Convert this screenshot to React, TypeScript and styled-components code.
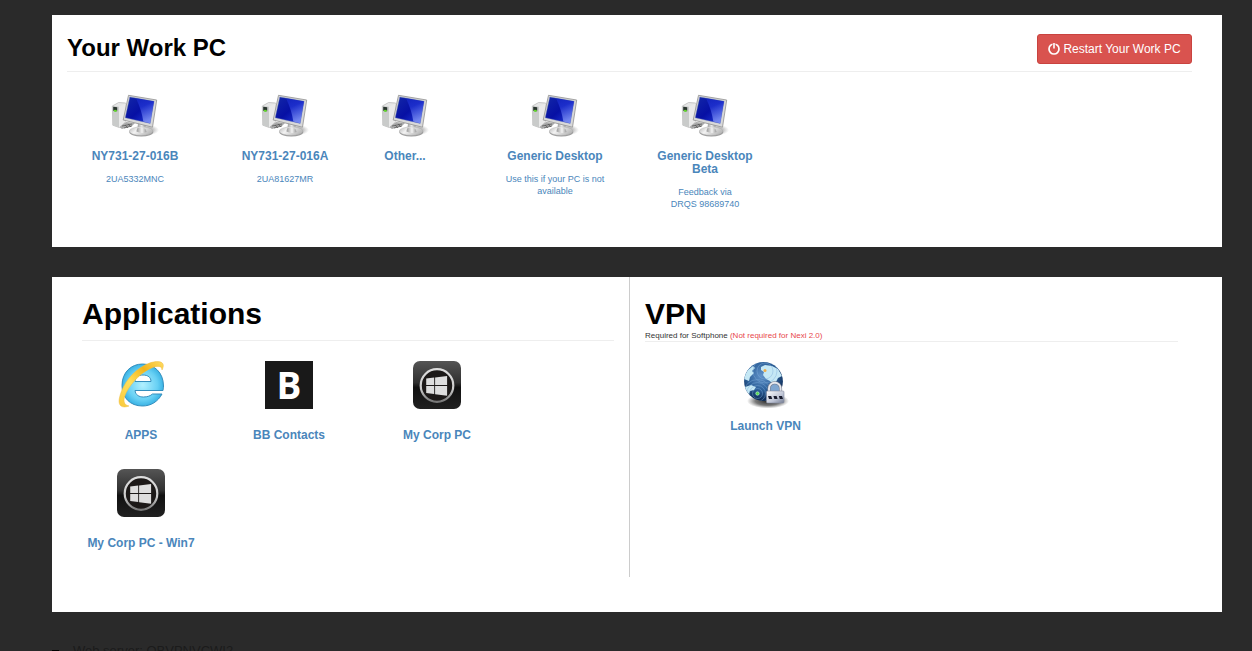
import React, { useId } from "react";
import styled, { createGlobalStyle } from "styled-components";

const GlobalStyle = createGlobalStyle`
  *, *::before, *::after { box-sizing: border-box; }
  html, body { margin: 0; height: 100%; overflow: hidden; }
  body {
    background: #2a2a2a;
    color: #333;
    font-family: "Liberation Sans", Arial, sans-serif;
    font-size: 14px;
  }
`;

const Page = styled.div`
  height: 651px;
  overflow: hidden;
  padding: 15px 30px 0 52px;
`;

const WorkPanel = styled.section`
  height: 232px;
  padding: 0 30px 0 15px;
  background: #fff;
`;

const LowerPanel = styled.section`
  display: flex;
  height: 335px;
  margin-top: 30px;
  padding: 0 15px;
  background: #fff;
`;

const WorkHeader = styled.header`
  display: flex;
  justify-content: space-between;
  align-items: flex-start;
  height: 57px;
  padding-top: 19px;
  border-bottom: 1px solid #eee;
`;

const WorkTitle = styled.h2`
  margin: 0;
  color: #000;
  font-size: 24px;
  line-height: 27px;
`;

const RestartButton = styled.button`
  display: flex;
  align-items: center;
  justify-content: center;
  gap: 3px;
  width: 155px;
  height: 30px;
  padding: 0;
  border: 1px solid #c9433f;
  border-radius: 3px;
  background: #d9534f;
  color: #fff;
  font: 12px "Liberation Sans", Arial, sans-serif;
  white-space: nowrap;
`;

const WorkList = styled.div`
  display: flex;
  padding: 22px 0 0 8px;
`;

const Tile = styled.a<{ $gap?: number }>`
  display: flex;
  flex-direction: column;
  align-items: center;
  width: 120px;
  margin-right: ${(p) => p.$gap ?? 30}px;
  color: #4a86bb;
  text-align: center;
  text-decoration: none;
`;

const TileLabel = styled.strong`
  margin-top: 12px;
  font-size: 12px;
  line-height: 13px;
`;

const TileNote = styled.span`
  margin-top: 10px;
  font-size: 9px;
  line-height: 12px;
  white-space: pre-line;
`;

const AppsColumn = styled.div`
  width: 563px;
  height: 300px;
  padding: 0 15px;
  border-right: 1px solid #ccc;
`;

const VpnColumn = styled.div`
  width: 563px;
  height: 300px;
  padding: 0 15px;
`;

const AppsHeader = styled.header`
  height: 64px;
  padding-top: 19px;
  border-bottom: 1px solid #eee;
`;

const VpnHeader = styled.header`
  height: 65px;
  padding-top: 19px;
  border-bottom: 1px solid #eee;
`;

const SectionTitle = styled.h1`
  margin: 0;
  color: #000;
  font-size: 30px;
  line-height: 35px;
`;

const Requirement = styled.p`
  margin: 0;
  font-size: 8px;
  line-height: 9px;
`;

const Warning = styled.span`
  color: #e8474b;
`;

const AppGrid = styled.div`
  display: grid;
  grid-template-columns: repeat(3, 148px);
  grid-auto-rows: 108px;
  margin-left: -15px;
  padding-top: 20px;
`;

const AppLink = styled.a`
  display: flex;
  flex-direction: column;
  align-items: center;
  color: #4a86bb;
  font-size: 12px;
  font-weight: bold;
  line-height: 14px;
  gap: 19px;
`;

const VpnLink = styled(AppLink)`
  width: 241px;
  padding-top: 18px;
  gap: 9px;
`;

const ContactMark = styled.div`
  width: 48px;
  height: 48px;
  background: #191919;
  color: #fff;
  font: bold 37px/47px "Open Sans", "Noto Sans", sans-serif;
  text-align: center;
`;

const Footer = styled.footer`
  display: flex;
  align-items: flex-start;
  gap: 14px;
  height: 39px;
  padding-top: 30px;
  overflow: hidden;
  color: #1b1b1b;
  font-size: 13px;
  line-height: 17px;
`;

const FooterMark = styled.span`
  width: 7px;
  height: 2px;
  margin-top: 8px;
  background: #000;
`;

const Icon = styled.svg`
  display: block;
  flex: none;
`;

function ComputerIcon() {
  const id = useId();
  const ref = (name: string) => `url(#${id}${name})`;
  return (
    <Icon width="50" height="44" viewBox="0 0 50 44">
      <defs>
        <linearGradient id={id + "screen"} x1="0" y1="0" x2="1" y2="1">
          <stop offset="0" stopColor="#1428a8" />
          <stop offset=".5" stopColor="#0610a4" />
          <stop offset="1" stopColor="#263fe0" />
        </linearGradient>
        <linearGradient id={id + "gloss"} x1="0" y1="0" x2=".3" y2="1">
          <stop offset="0" stopColor="#1526c4" />
          <stop offset=".4" stopColor="#2438d8" />
          <stop offset="1" stopColor="#8ea2fa" />
        </linearGradient>
        <linearGradient id={id + "metal"}>
          <stop offset="0" stopColor="#999" />
          <stop offset=".55" stopColor="#f2f2f2" />
          <stop offset="1" stopColor="#999" />
        </linearGradient>
        <linearGradient id={id + "base"} x2="1" y2=".4">
          <stop offset="0" stopColor="#b5b5b5" />
          <stop offset=".4" stopColor="#f3f3f3" />
          <stop offset="1" stopColor="#bbb" />
        </linearGradient>
        <radialGradient id={id + "shadow"}>
          <stop offset="0" stopColor="#333" stopOpacity=".8" />
          <stop offset="1" stopColor="#777" stopOpacity="0" />
        </radialGradient>
      </defs>
      <ellipse cx="36" cy="36" rx="13" ry="5.5" fill={ref("shadow")} />
      <path d="m9 33 7-5 9 1-3 3-10 3Z" fill="#aaa" />
      <path d="m12 32 10-2M14 34l8-2M15 31l3 3M18 30l3 3" fill="none" stroke="#555" strokeWidth=".7" />
      <path d="m2.3 12 6.3-3.5 7 .5v18.5l-6.5 6-6.3-2.3Z" fill="#e6e6e6" stroke="#aaa" strokeWidth=".6" />
      <path d="m2.5 12 6.5.8v20.4l-6.2-2Z" fill="#c9cbca" />
      <path d="m9 12.8 6.6-3.6v18.3L9 33.2Z" fill="#eaeaea" />
      <path d="m3.2 12.7 4 .5v4.1l-4-.5Z" fill="#29342e" />
      <ellipse cx="5.3" cy="16.8" rx="1.7" ry="1.1" fill="#61d52c" />
      <path d="M28 29h7.5v6h-8Z" fill={ref("metal")} />
      <ellipse cx="31.3" cy="38" rx="12" ry="4.5" fill="#999" />
      <ellipse cx="31" cy="37.1" rx="11.7" ry="4.2" fill={ref("base")} stroke="#bbb" strokeWidth=".5" />
      <path d="M27 34.5q4-2 8.5.5l1 3q-5 2-10-.5Z" fill={ref("metal")} />
      <path d="M18.5 1.3 46.7 6 42.5 33.2 13.2 26Z" fill="#d9d9d9" stroke="#909090" strokeWidth=".8" strokeLinejoin="round" />
      <path d="M19.8 2.9 44.1 7.2 40.2 29.4 15.2 23.7Z" fill={ref("screen")} stroke="#7084b5" strokeWidth=".4" />
      <path d="M26 4.2 43.9 7.4 40.1 29.2 33.3 27.6Q32 17 26 4.2Z" fill={ref("gloss")} opacity=".75" />
    </Icon>
  );
}

function ExplorerIcon() {
  const id = useId();
  return (
    <Icon width="48" height="48" viewBox="0 0 48 48">
      <defs>
        <radialGradient id={id + "blue"} cx=".5" cy=".5" r=".55">
          <stop offset="0" stopColor="#b1f0ff" />
          <stop offset=".65" stopColor="#67d0f4" />
          <stop offset="1" stopColor="#2ba9df" />
        </radialGradient>
        <linearGradient id={id + "gold"} x1="0" y1="1" x2="1" y2="0">
          <stop offset="0" stopColor="#f9ca3d" />
          <stop offset=".4" stopColor="#ffdf59" />
          <stop offset=".7" stopColor="#f2b51a" />
          <stop offset="1" stopColor="#ffdc65" />
        </linearGradient>
      </defs>
      <path
        d="M46 29.5H18C18.5 34 22 36 26.5 36c4 0 7-1.2 9-3H45C41 40.5 34 45 25.5 45 13 45 5 36.5 5 24.5 5 11.5 14 3 25.5 3S46.5 11.5 46.5 25c0 2-.2 3.2-.5 4.5ZM18 20.5h16c0-4-3-6.5-8-6.5s-8 2.5-8 6.5Z"
        fill={`url(#${id}blue)`}
        stroke="#348ebd"
        strokeWidth="1"
        fillRule="evenodd"
      />
      <path
        d="M12 45C5 47.5 1.2 45 2.2 38 4 28 11 15 23 7 33 .2 42-.8 45.3 2c1.5 1.4 1.3 4-.3 7 .1-3.8-3.8-4.5-9.1-2.6C26 10 15 20.5 9.3 31.5 5.8 38.5 6 44 12 45Z"
        fill={`url(#${id}gold)`}
        stroke="#eebc43"
        strokeWidth=".5"
      />
    </Icon>
  );
}

function WindowsIcon() {
  const id = useId();
  return (
    <Icon width="48" height="48" viewBox="0 0 48 48">
      <defs>
        <linearGradient id={id + "case"} x2="0" y2="1">
          <stop offset="0" stopColor="#555" />
          <stop offset=".45" stopColor="#303030" />
          <stop offset=".55" stopColor="#111" />
          <stop offset="1" stopColor="#202020" />
        </linearGradient>
        <linearGradient id={id + "ring"} x2="0" y2="1">
          <stop offset="0" stopColor="#ddd" />
          <stop offset=".6" stopColor="#ccc" />
          <stop offset="1" stopColor="#777" />
        </linearGradient>
      </defs>
      <rect width="48" height="48" rx="7" fill={`url(#${id}case)`} />
      <circle cx="24" cy="24.5" r="16.3" fill="#1c1918" stroke={`url(#${id}ring)`} strokeWidth="2.2" />
      <path
        d="m13.2 17.5 8-.9v7.5h-8Zm8.9-1 12-1.5v9.1h-12Zm-8.9 8.5h8v8l-8-1Zm8.9 0h12v9.7l-12-1.5Z"
        fill="#dedede"
      />
    </Icon>
  );
}

function GlobeLockIcon() {
  const id = useId();
  return (
    <Icon width="50" height="50" viewBox="0 0 50 50">
      <defs>
        <radialGradient id={id + "globe"} cx=".45" cy=".35" r=".62">
          <stop offset="0" stopColor="#6293ca" />
          <stop offset=".6" stopColor="#2d6099" />
          <stop offset="1" stopColor="#102e59" />
        </radialGradient>
        <radialGradient id={id + "shadow"}>
          <stop offset="0" stopColor="#222" />
          <stop offset=".6" stopColor="#333" stopOpacity=".65" />
          <stop offset="1" stopColor="#555" stopOpacity="0" />
        </radialGradient>
        <linearGradient id={id + "lock"} x2="1" y2="1">
          <stop offset="0" stopColor="#fff" />
          <stop offset=".6" stopColor="#bdc3d4" />
          <stop offset="1" stopColor="#737b91" />
        </linearGradient>
        <clipPath id={id + "clip"}>
          <circle cx="22.5" cy="21.5" r="19.3" />
        </clipPath>
      </defs>
      <ellipse cx="27" cy="41" rx="21" ry="7.5" fill={`url(#${id}shadow)`} />
      <circle cx="22.5" cy="21.5" r="19.4" fill={`url(#${id}globe)`} />
      <g clipPath={`url(#${id}clip)`}>
        <path
          d="m3 16 4-6 5-4 2 2-3 3 2 2-4 4-1 4-5-2Zm17-9 4-2 7 1 6 3 4 7-4 2-2 4-4 2-2-3-4-2-3-4 1-3-3-2ZM4 27l6-2 5 2-2 3-4 1-1 3-4-2Z"
          fill="#c5e8f5"
        />
        <g fill="none" stroke="#7faedb" strokeWidth=".6" opacity=".7">
          <circle cx="16.5" cy="33.5" r="5" />
          <circle cx="16.5" cy="33.5" r="8" />
          <circle cx="16.5" cy="33.5" r="11" />
          <circle cx="16.5" cy="33.5" r="14" />
          <circle cx="24" cy="11" r="8" />
          <circle cx="24" cy="11" r="12" />
        </g>
      </g>
      <circle cx="24" cy="10.5" r="1.5" fill="#efad4a" />
      <circle cx="16.5" cy="33.5" r="1.7" fill="#56d64a" stroke="#b6f0d0" strokeWidth=".7" />
      <path d="M28 33v-4.5a5.8 5.8 0 0 1 11.6 0V33" fill="#7fa6d0" stroke="#737a8b" strokeWidth="3" />
      <path d="M28 33v-4.5a5.8 5.8 0 0 1 11.6 0V33" fill="none" stroke="#e6e8ee" strokeWidth="1.9" />
      <rect x="25.5" y="31" width="17.5" height="12" rx="1" fill={`url(#${id}lock)`} stroke="#888da1" strokeWidth=".6" />
      <path d="M27 36h3.2l1 3H28Zm5.4 0h3.2l1 3h-3.2Zm5.4 0H41l1 3h-3.2Z" fill="#191c2d" />
    </Icon>
  );
}

function PowerIcon() {
  return (
    <Icon width="12" height="12" viewBox="0 0 12 12">
      <circle cx="6" cy="6" r="5" fill="none" stroke="#fff" strokeWidth="1.7" />
      <path d="M4.5 0h3v5h-3Z" fill="#d9534f" />
      <path d="M6 0v5.6" stroke="#fff" strokeWidth="1.6" />
    </Icon>
  );
}

const machines: { name: string; note?: string; gap?: number }[] = [
  { name: "NY731-27-016B", note: "2UA5332MNC" },
  { name: "NY731-27-016A", note: "2UA81627MR", gap: 0 },
  { name: "Other..." },
  { name: "Generic Desktop", note: "Use this if your PC is not\navailable" },
  { name: "Generic Desktop Beta", note: "Feedback via\nDRQS 98689740" },
];

export default function App() {
  return (
    <>
      <GlobalStyle />
      <Page>
        <WorkPanel>
          <WorkHeader>
            <WorkTitle>Your Work PC</WorkTitle>
            <RestartButton>
              <PowerIcon />
              Restart Your Work PC
            </RestartButton>
          </WorkHeader>
          <WorkList>
            {machines.map((machine) => (
              <Tile key={machine.name} $gap={machine.gap}>
                <ComputerIcon />
                <TileLabel>{machine.name}</TileLabel>
                {machine.note && <TileNote>{machine.note}</TileNote>}
              </Tile>
            ))}
          </WorkList>
        </WorkPanel>
        <LowerPanel>
          <AppsColumn>
            <AppsHeader>
              <SectionTitle>Applications</SectionTitle>
            </AppsHeader>
            <AppGrid>
              <AppLink>
                <ExplorerIcon />
                APPS
              </AppLink>
              <AppLink>
                <ContactMark>B</ContactMark>
                BB Contacts
              </AppLink>
              <AppLink>
                <WindowsIcon />
                My Corp PC
              </AppLink>
              <AppLink>
                <WindowsIcon />
                My Corp PC - Win7
              </AppLink>
            </AppGrid>
          </AppsColumn>
          <VpnColumn>
            <VpnHeader>
              <SectionTitle>VPN</SectionTitle>
              <Requirement>
                Required for Softphone <Warning>(Not required for Nexi 2.0)</Warning>
              </Requirement>
            </VpnHeader>
            <VpnLink>
              <GlobeLockIcon />
              Launch VPN
            </VpnLink>
          </VpnColumn>
        </LowerPanel>
        <Footer>
          <FooterMark />
          Web server: OBVPNVCWI2
        </Footer>
      </Page>
    </>
  );
}
